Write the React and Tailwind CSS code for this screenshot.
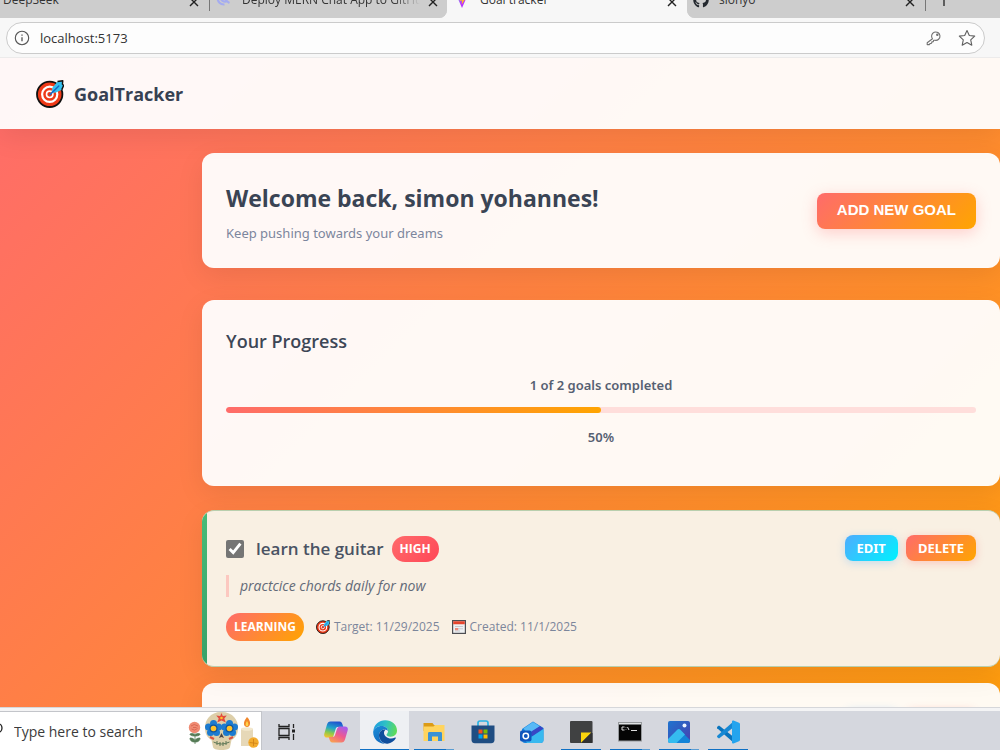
import { useId } from "react";
import { FaGithub } from "react-icons/fa";

function TargetIcon({ className }) {
  return (
    <svg viewBox="0 0 28 28" className={className} aria-hidden="true">
      <circle cx="13.7" cy="14.3" r="12.7" fill="#ef3a18" stroke="#111" strokeWidth="1.8" />
      <circle cx="13.7" cy="14.3" r="7.6" fill="none" stroke="#fff" strokeWidth="2.2" />
      <circle cx="13.7" cy="14.3" r="3.2" fill="#ef3a18" stroke="#fff" strokeWidth="1.6" />
      <path d="M15.5 13 L16.5 7.5 L21.5 1.8 L26.8 0.8 L26.4 3.8 L27.6 5.2 L25.4 10 L20 12.5 Z" fill="#35c1f1" />
      <path d="M21.5 1.5 L26.8 0.8 L26.4 4 L27.6 5.6 L25.8 9.6" fill="none" stroke="#111" strokeWidth="1.4" strokeLinejoin="round" />
      <path d="M14 14.6 L22.8 6" stroke="#1769c5" strokeWidth="1.5" strokeLinecap="round" />
    </svg>
  );
}

function CalendarIcon({ className }) {
  return (
    <svg viewBox="0 0 14 14" className={className} aria-hidden="true">
      <rect x="0.6" y="0.6" width="12.8" height="12.8" fill="#eef0f2" stroke="#4d4d52" strokeWidth="1.2" />
      <path d="M1.2 1.2h11.600v3H1.200z" fill="#e5442c" />
      <path d="M3 6.500h8M3 8.800h8M3 11h5" stroke="#c5c9cf" strokeWidth="1" />
      <path d="M3 8h3.200v2.200H3z" fill="#ef8a7c" />
    </svg>
  );
}

function ViteIcon() {
  const id = useId();
  return (
    <svg viewBox="0 0 14 18" className="h-[18px] w-3.5 shrink-0" aria-hidden="true">
      <defs>
        <linearGradient id={id} x1="0" y1="0" x2="1" y2="1">
          <stop offset="0" stopColor="#41d1ff" />
          <stop offset="0.6" stopColor="#bd34fe" />
          <stop offset="1" stopColor="#8f35f5" />
        </linearGradient>
      </defs>
      <path d="M0 2 L7 18 L14 2 L7 4 Z" fill={`url(#${id})`} />
      <path d="M4.500 2 L10 2 L9 8.500 L10.400 8.500 L6.800 14.500 L7 10.500 L4.800 10.700 Z" fill="#ffbd25" />
    </svg>
  );
}

function CloseIcon() {
  return (
    <svg viewBox="0 0 10 10" className="size-2.5" fill="none" stroke="#222" strokeWidth="1.4" aria-hidden="true">
      <path d="M1 1 L9 9 M9 1 L1 9" />
    </svg>
  );
}

function Tab({ label, icon, active, fade, className, closeClass }) {
  return (
    <div className={`flex h-full items-end overflow-hidden ${active ? "bg-[#f7f7f7]" : "bg-[#cdcdcd]"} ${className}`}>
      {icon}
      <span className={`mb-2.5 min-w-0 flex-1 overflow-hidden text-xs leading-4 whitespace-nowrap text-[#333] ${fade ? "[mask-image:linear-gradient(to_right,black_85%,transparent)]" : ""}`}>{label}</span>
      <button type="button" aria-label={`Close ${label}`} className={`mb-[11px] shrink-0 ${closeClass}`}>
        <CloseIcon />
      </button>
    </div>
  );
}

function Browser() {
  return (
    <div className="shrink-0">
      <div className="flex h-[18px] overflow-hidden bg-[#f7f7f7]">
        <div className="flex w-[447px] rounded-br-lg bg-[#cdcdcd]">
          <Tab label="DeepSeek" className="w-[209px] pl-[3px]" closeClass="mr-2.5" />
          <div className="h-[11px] w-px bg-[#777]" />
          <Tab
            fade
            label="Deploy MERN Chat App to GitHub"
            className="flex-1 rounded-br-lg pl-1.5"
            closeClass="ml-2 mr-[9px]"
            icon={
              <svg viewBox="0 0 14 14" className="mr-3 mb-3 size-3.5 shrink-0" fill="none" stroke="#a5acf0" strokeWidth="2.2" aria-hidden="true">
                <path d="M1.500 5c0 5 3 7.800 7 7.500M4.500 5c.5 4 3 5 6 4.500M9 5c0 3 1.500 4.500 4.500 6M12.500 2c.5 3-1 5-3 7" />
              </svg>
            }
          />
        </div>
        <Tab
          active
          label="Goal tracker"
          className="w-60 pl-2"
          closeClass="mr-2.5"
          icon={<div className="mr-[11px] mb-2.5"><ViteIcon /></div>}
        />
        <div className="flex flex-1 rounded-bl-lg bg-[#cdcdcd]">
          <Tab
            label="sionyo"
            className="w-[238px] rounded-bl-lg pl-1.5"
            closeClass="mr-2.5"
            icon={<FaGithub className="mr-2.5 mb-2.5 size-4 shrink-0 text-[#24292f]" />}
          />
          <div className="h-[11px] w-px bg-[#777]" />
          <button type="button" aria-label="New tab" className="ml-2.5 flex h-[18px] items-end pb-[11px]">
            <svg viewBox="0 0 16 16" className="size-4" stroke="#222" strokeWidth="1.300" aria-hidden="true">
              <path d="M8 1v14M1 8h14" />
            </svg>
          </button>
        </div>
      </div>
      <div className="border-b border-[#ecebeb] bg-[#f7f7f7] pt-1 pr-[15px] pb-[3px] pl-1.5">
        <div className="flex h-8 items-center rounded-full border border-[#cbcbcb] bg-[#fdfdfd] pr-2 pl-[7px]">
          <svg viewBox="0 0 16 16" className="size-4 shrink-0" fill="none" stroke="#555" strokeWidth="1.1" aria-hidden="true">
            <circle cx="8" cy="8" r="6.700" />
            <path d="M8 7.200v4M8 4.500v1.300" strokeWidth="1.300" />
          </svg>
          <input aria-label="Address" defaultValue="localhost:5173" className="ml-2.5 min-w-0 flex-1 bg-transparent text-[13px] leading-5 text-[#333] outline-none" />
          <button type="button" aria-label="Passwords" className="mr-4">
            <svg viewBox="0 0 16 16" className="size-4" fill="none" stroke="#707070" strokeWidth="1.1" strokeLinejoin="round" aria-hidden="true">
              <path d="M6.500 8.800A4.200 4.200 0 1 1 9 10.300L7.700 10.200 7.300 11.600 5.900 11.900 5.500 13.300 4 13.600 3.300 14.600H1.200V12.700L6.500 8.800Z" />
              <circle cx="11.300" cy="4.800" r="0.700" />
            </svg>
          </button>
          <button type="button" aria-label="Add to favorites">
            <svg viewBox="0 0 18 18" className="size-[18px]" fill="none" stroke="#606060" strokeWidth="1.1" strokeLinejoin="round" aria-hidden="true">
              <path d="M9 1.500 11.300 6.500 16.700 7.100 12.700 10.800 13.800 16.200 9 13.500 4.200 16.200 5.300 10.800 1.300 7.100 6.700 6.500Z" />
            </svg>
          </button>
        </div>
      </div>
    </div>
  );
}

const cardBase = "rounded-xl px-6 shadow-[0_8px_28px_rgba(0,0,0,0.08)]";
const smallText = "font-['Noto_Sans',sans-serif] text-[13px] leading-5";

function ProgressCard({ done, total }) {
  const percent = Math.round((done / total) * 100);
  return (
    <section className={`${cardBase} mt-8 border-y border-white/20 bg-white/95 pt-[26px] pb-[38px]`}>
      <h2 className="text-lg leading-7 font-semibold text-[#3d4655]">Your Progress</h2>
      <p className={`${smallText} mt-5 text-center font-semibold text-[#566072]`}>
        {done} of {total} goals completed
      </p>
      <div role="progressbar" aria-label="Goals completed" aria-valuenow={percent} aria-valuemin={0} aria-valuemax={100} className="mt-3 h-1.5 overflow-hidden rounded-full bg-[#ffdedb]">
        <div className="h-full rounded-full bg-[linear-gradient(135deg,#ff6b6b,#ffa500)]" style={{ width: `${percent}%` }} />
      </div>
      <p className={`${smallText} mt-3.5 text-center font-semibold text-[#566072]`}>{percent}%</p>
    </section>
  );
}

function GoalActions() {
  return (
    <div className="flex gap-2 font-['Noto_Sans',sans-serif] text-[13px] leading-4 font-bold text-white">
      <button type="button" className="h-[26px] rounded-lg bg-[linear-gradient(135deg,#4facfe,#00f2fe)] px-3 shadow-[0_2px_8px_rgba(79,172,254,0.3)]">EDIT</button>
      <button type="button" className="h-[26px] rounded-lg bg-[linear-gradient(135deg,#ff6b6b,#ffa500)] px-3 shadow-[0_2px_8px_rgba(255,107,107,0.3)]">DELETE</button>
    </div>
  );
}

function GoalCard() {
  return (
    <section className="relative mt-6 overflow-hidden rounded-xl border-y border-[#b9cfae] bg-[#f9f0e3] px-6 pt-6 pb-[25px] shadow-[0_8px_28px_rgba(0,0,0,0.08)]">
      <div className="absolute inset-y-0 left-0 w-[5px] bg-[linear-gradient(180deg,#48bb78,#38a169)]" />
      <div className="flex items-start justify-between">
        <div className="flex h-7 items-center">
          <input id="goal-done" type="checkbox" defaultChecked className="size-[18px] accent-[#757575]" />
          <label htmlFor="goal-done" className="ml-3 text-[17px] leading-7 font-semibold text-[#4a5363]">learn the guitar</label>
          <span className="ml-2 flex h-[26px] items-center rounded-full bg-[linear-gradient(135deg,#ff6b6b,#ff4757)] px-2 text-xs leading-4 font-bold text-white">HIGH</span>
        </div>
        <GoalActions />
      </div>
      <p className="mt-3 border-l-[3px] border-[#fcc8c0] pl-[11px] text-sm leading-[22px] text-[#636a78] italic">practcice chords daily for now</p>
      <div className="mt-4 flex items-center text-xs leading-5 text-[#7c869b]">
        <span className="flex h-7 items-center rounded-2xl bg-[linear-gradient(135deg,#ff6b6b,#ffa500)] px-2 font-bold text-white">LEARNING</span>
        <span className="ml-3 flex items-center gap-1"><TargetIcon className="size-3.5" />Target: 11/29/2025</span>
        <span className="ml-3 flex items-center gap-1"><CalendarIcon className="size-3.5" />Created: 11/1/2025</span>
      </div>
    </section>
  );
}

function GoalTracker() {
  return (
    <div className="min-h-0 flex-1 overflow-hidden bg-[linear-gradient(135deg,#ff6b6b_0%,#ffa500_115%)]">
      <header className="relative flex h-[71px] items-center gap-2.5 border-b border-white/20 bg-white/95 pt-0.5 pl-9 shadow-[0_8px_28px_rgba(0,0,0,0.08)]">
        <TargetIcon className="size-7" />
        <span className="text-lg leading-7 font-bold text-[#364152]">GoalTracker</span>
      </header>
      <main className="pt-6 pl-[202px]">
        <section className={`${cardBase} flex items-center justify-between border-y border-white/20 bg-white/95 py-6`}>
          <div>
            <h1 className="text-[23px] leading-10 font-bold text-[#3a4454]">Welcome back, simon yohannes!</h1>
            <p className={`${smallText} mt-[5px] text-[#7c869d]`}>Keep pushing towards your dreams</p>
          </div>
          <button type="button" className="h-9 rounded-lg bg-[linear-gradient(135deg,#ff6b6b,#ffa500)] px-5 font-['Liberation_Sans',Arial,sans-serif] text-[15px] font-bold text-white shadow-[0_4px_15px_rgba(255,107,107,0.3)]">
            ADD NEW GOAL
          </button>
        </section>
        <ProgressCard done={1} total={2} />
        <GoalCard />
        <section className={`${cardBase} mt-4 flex h-40 justify-end border-y border-white/20 bg-white/95 pt-6`}>
          <GoalActions />
        </section>
      </main>
    </div>
  );
}

function TaskButton({ label, active, running, stacked, children }) {
  return (
    <button type="button" aria-label={label} className={`flex h-full w-[49px] shrink-0 flex-col items-center justify-end ${active ? "bg-[#eef0f3]" : ""}`}>
      <svg viewBox="0 0 24 24" className="mb-[5px] size-6" aria-hidden="true">{children}</svg>
      <span className={`flex h-px ${active ? "w-full" : "w-10"}`}>
        <span className={`h-full flex-1 ${active || running ? "bg-[#0f70c4]" : ""}`} />
        {stacked && <span className="h-full w-2 bg-[#5a9dd3]" />}
      </span>
    </button>
  );
}

function SearchArt() {
  return (
    <svg viewBox="0 0 73 38" className="h-[38px] w-[73px] shrink-0" aria-hidden="true">
      <path d="M7 20v12M7 30c-4 0-5-2-5-4 3 0 5 1 5 4M7 30c4 0 5-2 5-4-3 0-5 1-5 4M7 24c-4 0-5-1-5-2 3-1 5 0 5 2M7 24c4 0 5-1 5-2-3-1-5 0-5 2" fill="#547b55" stroke="#547b55" strokeWidth="0.800" />
      <circle cx="6.500" cy="15.500" r="5.700" fill="#ef8b73" />
      <path d="M3 14q3-3 7 0M3.500 17q3 2.500 6-.5M5 15.500h3.500" fill="none" stroke="#d7654f" strokeWidth="0.900" />
      <path d="M33.500 0C22 0 16.500 8 17 17c.3 6 3 9 6.500 11l1.500 7c.5 2 3 3 8.500 3s8-1 8.500-3l1.500-7c3.500-2 6.200-5 6.500-11C50.500 8 45 0 33.500 0Z" fill="#ddcfaa" />
      <g fill="#1c7bd0">
        <circle cx="25.500" cy="11.500" r="3.500" /><circle cx="30.500" cy="15" r="3.500" /><circle cx="28.500" cy="20.500" r="3.500" /><circle cx="22.500" cy="20.500" r="3.500" /><circle cx="20.500" cy="15" r="3.500" />
        <circle cx="41.500" cy="11.500" r="3.500" /><circle cx="46.500" cy="15" r="3.500" /><circle cx="44.500" cy="20.500" r="3.500" /><circle cx="38.500" cy="20.500" r="3.500" /><circle cx="36.500" cy="15" r="3.500" />
      </g>
      <circle cx="25.500" cy="16.500" r="4" fill="#115499" /><circle cx="41.500" cy="16.500" r="4" fill="#115499" />
      <circle cx="25.500" cy="16.500" r="2.800" fill="#ffc229" /><circle cx="41.500" cy="16.500" r="2.800" fill="#ffc229" />
      <path d="m33.500 1 1.300 3 4-.5-2.500 3 1.500 4-4.300-2-4.300 2 1.500-4-2.500-3 4 .5Z" fill="#e34b3d" />
      <circle cx="33.500" cy="6" r="1.300" fill="#ffc229" />
      <path d="M33.500 21l-2.500 5 2.500-1 2.500 1Z" fill="#4d4540" />
      <path d="M25.500 30q8 4 16 0M29 29v4M32 30v4M35 30v4M38 29v4" fill="none" stroke="#5c7655" strokeWidth="1" />
      <path d="m22 25 4 2M45 25l-4 2" stroke="#dc513f" strokeWidth="2" />
      <path d="M53 17c3-1.500 9-1.500 12 0v17H53Z" fill="#e6d8b8" />
      <ellipse cx="59" cy="17" rx="6" ry="1.800" fill="#f3e8cd" />
      <path d="M59 5c5 5 3 10 0 10s-5-4 0-10" fill="#f1872b" />
      <path d="M59 9c2 3 1.500 5 0 5s-2-2 0-5" fill="#ffd34b" />
      <circle cx="65.500" cy="30.500" r="5.200" fill="#f3ab2d" />
      <path d="m61.500 30.500 8 1M65.500 27v7" stroke="#ce8016" strokeWidth="0.800" />
    </svg>
  );
}

function Taskbar() {
  const id = useId();
  return (
    <footer className="flex h-[43px] shrink-0 flex-col border-t border-[#d6d7da] bg-[#f4f4f5]">
      <div className="mt-[3px] flex min-h-0 flex-1 bg-[#d5d7de]">
        <div className="flex w-[262px] shrink-0 items-center border-t border-r border-[#c3c5ca] bg-white">
          <svg viewBox="0 0 4 14" className="mb-1 h-3.5 w-1 shrink-0" fill="none" stroke="#222" strokeWidth="1.300" aria-hidden="true">
            <circle cx="-2.500" cy="6" r="4.500" />
          </svg>
          <input aria-label="Search" placeholder="Type here to search" className="ml-2.5 min-w-0 flex-1 bg-transparent pt-0.5 text-sm leading-5 outline-none placeholder:text-[#3b3b3b]" />
          <SearchArt />
        </div>
        <TaskButton label="Task view">
          <g fill="none" stroke="#222" strokeWidth="1.300">
            <path d="M4 8.500h10v7H4ZM4 4v2.500h10V4M4 20v-2.500h10V20M18.500 4v4M18.500 14v6" />
          </g>
          <path d="M17 9.500h3v3h-3z" fill="#222" />
        </TaskButton>
        <TaskButton label="Copilot">
          <defs>
            <linearGradient id={`${id}c1`} x1="0.500" y1="0" x2="0.200" y2="1"><stop stopColor="#2054cf" /><stop offset="0.400" stopColor="#20a6ca" /><stop offset="0.700" stopColor="#8bc94b" /><stop offset="1" stopColor="#f5c42c" /></linearGradient>
            <linearGradient id={`${id}c2`} x1="0.800" y1="0" x2="0.200" y2="1"><stop stopColor="#a35bf0" /><stop offset="0.500" stopColor="#ef598f" /><stop offset="1" stopColor="#f9a24f" /></linearGradient>
          </defs>
          <path d="M6.500 1.500h9c2 0 2.500 1.500 3 3l.8 2.500h-3c-2 0-2.700 1-3.300 3l-1.600 5.200c-.5 1.500-1.300 2.300-3 2.300H3c-2.800 0-3.300-2-2.500-4.500L3 4.500c.7-2 1.500-3 3.500-3Z" fill={`url(#${id}c1)`} />
          <path d="M17.500 22.500h-9c-2 0-2.500-1.500-3-3L4.700 17h3c2 0 2.700-1 3.300-3l1.600-5.200c.5-1.500 1.300-2.300 3-2.300H21c2.800 0 3.300 2 2.500 4.500L21 19.500c-.7 2-1.500 3-3.500 3Z" fill={`url(#${id}c2)`} />
          <path d="M14.600 7c-1 .4-1.400 1.300-1.800 2.600l-1.600 5c-.3 1-.8 1.900-1.600 2.400l-.4-.2 2.600-8.300c.4-1 1-1.500 2-1.500Z" fill="#e8e4ef" />
        </TaskButton>
        <TaskButton label="Microsoft Edge" active>
          <defs>
            <linearGradient id={`${id}e1`} x1="0" y1="0.300" x2="1" y2="0.500"><stop stopColor="#1b9de2" /><stop offset="0.500" stopColor="#2fc2c2" /><stop offset="1" stopColor="#5fdc58" /></linearGradient>
            <linearGradient id={`${id}e2`} x1="0" y1="0" x2="0.500" y2="1"><stop stopColor="#1b8fd9" /><stop offset="1" stopColor="#1269bd" /></linearGradient>
          </defs>
          <path d="M.300 11C1 4.500 6 .300 12.200.300 19 .300 24 5 24 10.500c0 4-3 6.200-6.300 6.200-2.700 0-4.200-1-4.200-1.900 0-.8 1.500-1.500 1.500-3.600C15 8 12 6 8.500 6 4.500 6 1.500 8.200.300 11Z" fill={`url(#${id}e1)`} />
          <path d="M.300 11C1.500 8.200 4.500 6 8.500 6c3.500 0 6.300 2 6.500 5-1-1-2.200-1.500-3.500-1.500C8 9.500 5.800 12.500 6 16c.2 3.500 2.500 6.500 6 7.800C5 24-.700 18 .300 11Z" fill={`url(#${id}e2)`} />
          <path d="M11.500 9.500C8 9.500 5.800 12.500 6 16c.3 4.500 4.500 8 8.500 7.700 3.800-.500 6.700-2.700 8.300-5.500.3-.6-.2-.9-.7-.6-5.500 2.500-11.100-.600-11.100-4.600 0-1.500.7-2.600 1.700-3.400Z" fill="#104f9d" />
        </TaskButton>
        <TaskButton label="File Explorer" running stacked>
          <path d="M1.500 3h9l1.500 2h9.500v6h-20Z" fill="#dc9b16" />
          <path d="M1.500 6.500h10l1.500-1.500h9.500v16h-21Z" fill="#ffd45e" />
          <path d="M6 21v-7.500c0-.800.500-1.500 1.300-1.500h11.400c.8 0 1.300.700 1.300 1.500V21h-4v-4.500h-6V21Z" fill="#3992d6" />
        </TaskButton>
        <TaskButton label="Microsoft Store">
          <path d="M7 7V3c0-1.200.700-2 2-2h6c1.300 0 2 .800 2 2v4" fill="none" stroke="#2ab3e4" strokeWidth="1.700" />
          <path d="M.500 5.500h23V20c0 2-1.500 3.300-3.300 3.300H3.800C2 23.300.500 22 .500 20Z" fill="#1f4d82" />
          <path d="M7.500 9.500h4v4h-4z" fill="#f25022" /><path d="M12.500 9.500h4v4h-4z" fill="#7fba00" /><path d="M7.500 14.500h4v4h-4z" fill="#00a4ef" /><path d="M12.500 14.500h4v4h-4z" fill="#ffb900" />
        </TaskButton>
        <TaskButton label="Outlook">
          <path d="M2 9 13 1.500 23.500 8v12c0 1.800-1.200 3-3 3H5c-1.800 0-3-1.200-3-3Z" fill="#1684dc" />
          <path d="M3.500 8.500 13 2l7 4.500-12 8Z" fill="#58b9f6" />
          <path d="m9 13 11-7 3.500 2.500-11 8Z" fill="#3846c5" />
          <path d="m23.500 9-17 11c-1 .800-.5 3 2 3h12c1.800 0 3-1.200 3-3Z" fill="#39b9ef" />
          <rect y="10.500" width="11.500" height="11" rx="2" fill="#0f55bc" />
          <circle cx="5.800" cy="16" r="2.700" fill="none" stroke="#fff" strokeWidth="1.500" />
        </TaskButton>
        <TaskButton label="Sticky Notes" running>
          <rect x="1" y="1" width="22.500" height="22" rx="1" fill="#404142" />
          <path d="M12 12.500h10V13L12.500 22.500H12Z" fill="#fbd50d" />
          <path d="m22 13-9.500 9.500V23H23.500V13Z" fill="#303132" />
        </TaskButton>
        <TaskButton label="Command Prompt" running stacked>
          <rect x="0.500" y="2.500" width="23" height="18.500" fill="#050505" stroke="#96999c" />
          <path d="M1 3h22v1.500H1z" fill="#dfe2e4" />
          <path d="M6.500 7H4v3h2.500M8 7.500v.5M8 9.500v.5M9.500 7l1.500 3M13 10.500h6" fill="none" stroke="#ddd" strokeWidth="1" />
        </TaskButton>
        <TaskButton label="Photos" running stacked>
          <defs>
            <linearGradient id={`${id}p`} x1="0" y1="0" x2="1" y2="1"><stop stopColor="#1f74cf" /><stop offset="1" stopColor="#4a3fae" /></linearGradient>
          </defs>
          <rect x="1" y="1" width="22" height="22" rx="2" fill={`url(#${id}p)`} />
          <path d="m9 20 5-6c1-1 2-1 3 0l6 6v1c0 1.200-.8 2-2 2H9Z" fill="#1484d8" />
          <path d="M1 19 10 10c1.200-1.200 2.500-1.200 3.600 0l4.400 4.500L9.500 23H3c-1.200 0-2-.8-2-2Z" fill="#35bcef" />
          <circle cx="17.500" cy="5.500" r="2" fill="#eef4ff" />
        </TaskButton>
        <TaskButton label="Visual Studio Code" running>
          <path d="m1 7 2-1.500 15 11.800V23L1.200 8.300Z" fill="#0873bd" />
          <path d="m1 17 2 1.500L18 7V1L1.200 15.700Z" fill="#1688d4" />
          <path d="m17.500.5 5.500 2.300c.6.300 1 .8 1 1.500v15.400c0 .700-.4 1.200-1 1.500l-5.500 2.300c-.8.300-1.500 0-1.500-.700V1.200c0-.700.700-1 1.500-.7Z" fill="#24a4ee" />
        </TaskButton>
      </div>
    </footer>
  );
}

export default function App() {
  return (
    <div className="flex h-screen flex-col overflow-hidden font-['Open_Sans','Noto_Sans',sans-serif]">
      <Browser />
      <GoalTracker />
      <Taskbar />
    </div>
  );
}
